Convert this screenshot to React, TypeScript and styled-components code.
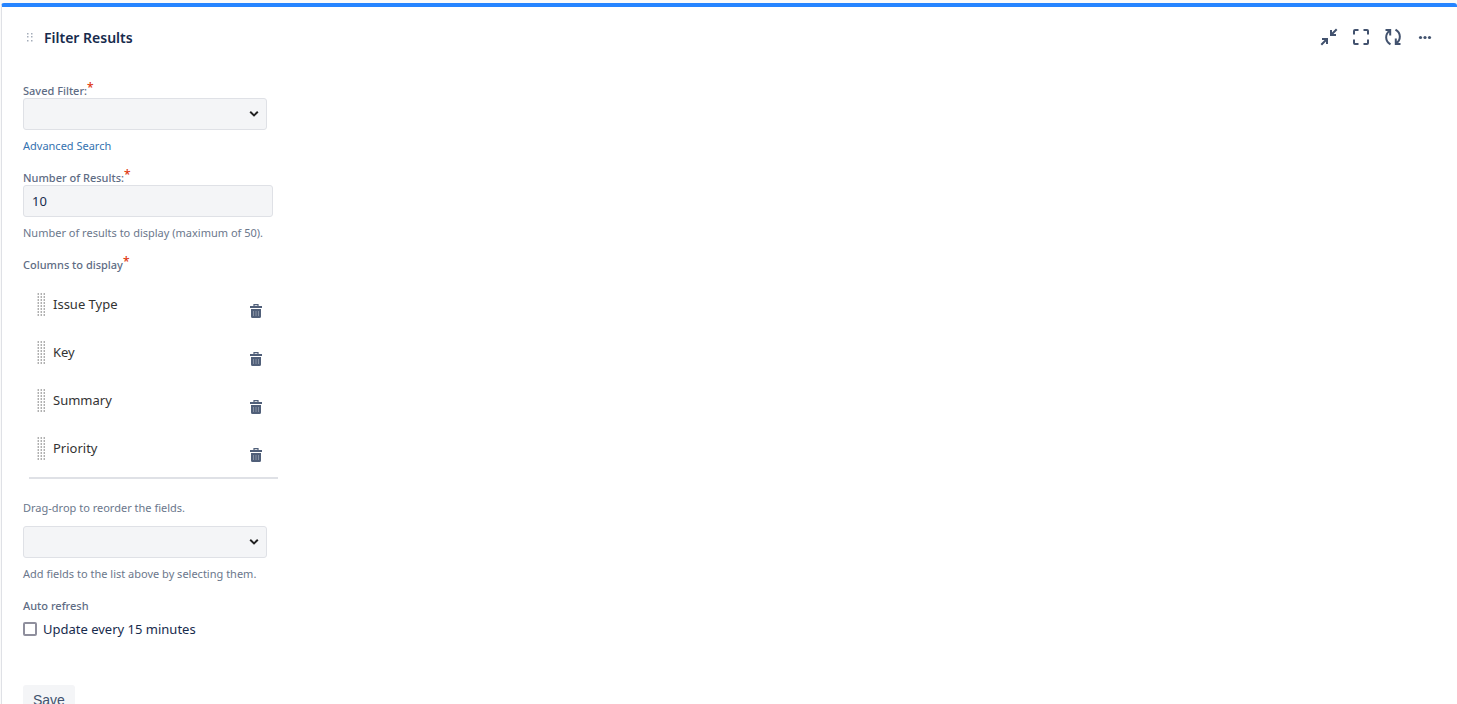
import React from 'react';
import styled, { createGlobalStyle } from 'styled-components';

const GlobalStyle = createGlobalStyle`
  * { box-sizing: border-box; }
  html { scrollbar-width: none; }
  body {
    margin: 0;
    background: #fafafa;
    color: #172b4d;
    font: 13px/20px "Segoe UI", "Noto Sans", "Open Sans", sans-serif;
  }
`;

const Gadget = styled.section`
  margin: 3px 0 0 1px;
  padding: 20px 20px 24px 21px;
  background: #fff;
  border-left: 1px solid #dfe1e6;
  border-top: 4px solid #2684ff;
  border-radius: 3px 3px 0 0;
`;

const Header = styled.header`
  display: flex;
  align-items: center;
  justify-content: space-between;
  height: 22px;
`;

const TitleGroup = styled.div`
  display: flex;
  align-items: center;
  gap: 10px;
  padding-left: 3px;
`;

const Title = styled.h2`
  margin: 0;
  font-size: 14px;
  line-height: 24px;
  font-weight: 600;
`;

const Actions = styled.div`
  display: flex;
  gap: 8px;
  padding-bottom: 2px;
`;

const IconButton = styled.button`
  display: flex;
  padding: 0;
  border: 0;
  background: none;
  color: #42526e;
  cursor: pointer;
`;

const Form = styled.form`
  display: flex;
  flex-direction: column;
  align-items: flex-start;
  padding-top: 33px;
`;

const Field = styled.div`
  display: flex;
  flex-direction: column;
  align-items: flex-start;
  margin-bottom: 15px;
`;

const Label = styled.label`
  display: block;
  height: 16px;
  color: #5e6c84;
  font-size: 11px;
  line-height: 18px;
  font-weight: 500;
`;

const Star = styled.span`
  color: #de350b;
  font-size: 12px;
  line-height: 0;
  vertical-align: 3px;
`;

const SelectWrap = styled.div`
  position: relative;
  width: 244px;
  svg {
    position: absolute;
    right: 8px;
    top: 12px;
    pointer-events: none;
  }
`;

const Select = styled.select`
  appearance: none;
  display: block;
  width: 100%;
  height: 32px;
  border: 1px solid #dfe1e6;
  border-radius: 3px;
  background: #f4f5f7;
`;

const TextInput = styled.input`
  width: 250px;
  height: 32px;
  padding: 0 8px;
  border: 1px solid #dfe1e6;
  border-radius: 3px;
  background: #f4f5f7;
  color: #172b4d;
  font: inherit;
`;

const Link = styled.a`
  margin-top: 8px;
  color: #3572b0;
  font-size: 11px;
  line-height: 16px;
  text-decoration: none;
`;

const Hint = styled.p`
  margin: 8px 0 0;
  color: #6b778c;
  font-size: 11px;
  line-height: 16px;
`;

const AddColumn = styled.div`
  margin-top: 10px;
`;

const Columns = styled.ul`
  width: 249px;
  margin: 9px 0 13px 6px;
  padding: 0 0 4px;
  list-style: none;
  border-bottom: 2px solid #dfe1e6;
`;

const ColumnRow = styled.li`
  display: flex;
  align-items: flex-start;
  height: 48px;
  padding: 12px 16px 0 8px;
  color: #333;
`;

const ColumnName = styled.span`
  flex: 1;
  padding-left: 8px;
  line-height: 22px;
`;

const DeleteButton = styled(IconButton)`
  margin-top: 11px;
  color: #505f79;
`;

const CheckLabel = styled.label`
  display: flex;
  align-items: center;
  gap: 6px;
  margin-top: 6px;
`;

const Checkbox = styled.input`
  appearance: none;
  width: 14px;
  height: 14px;
  margin: 0;
  border: 2px solid #8f8f9d;
  border-radius: 2px;
  background: #fff;
  &:checked { background: #0052cc; }
`;

const SaveButton = styled.button`
  margin-top: 31px;
  height: 30px;
  padding: 0 10px;
  border: 0;
  border-radius: 3px;
  background: #f4f5f7;
  color: #42526e;
  font: 14px/20px "Liberation Sans", Arial, sans-serif;
`;

const ActionIcon = ({ children }: { children: React.ReactNode }) => (
  <svg width="24" height="24" viewBox="0 0 24 24" fill="none" stroke="currentColor" strokeWidth="2" aria-hidden="true">
    {children}
  </svg>
);

const Chevron = () => (
  <svg width="10" height="8" viewBox="0 0 10 8" fill="none" stroke="#222" strokeWidth="2" aria-hidden="true">
    <path d="M1.200 1.800 5 5.400l3.800-3.600" />
  </svg>
);

const HeaderGrip = () => (
  <svg width="8" height="10" viewBox="0 0 8 10" fill="#a5adba" aria-hidden="true">
    {[0, 3, 7].map((y) => [1, 5].map((x) => <rect key={`${x}-${y}`} x={x} y={y} width="1.500" height="1.500" />))}
  </svg>
);

const RowGrip = () => (
  <svg width="8" height="24" viewBox="0 0 8 24" aria-hidden="true">
    {[0, 3, 6, 9, 12, 15, 18, 21].map((y) =>
      [0, 3, 6].map((x) => (
        <g key={`${x}-${y}`}>
          <rect x={x} y={y} width="2" height="2" fill="#dcdcdc" />
          <rect x={x + 1} y={y} width="1" height="2" fill="#b0b0b0" />
        </g>
      )),
    )}
  </svg>
);

const Trash = () => (
  <svg width="12" height="14" viewBox="0 0 12 14" aria-hidden="true">
    <path d="M4 2V.7h4V2" fill="none" stroke="currentColor" strokeWidth="1.200" />
    <path d="M0 2h12v2H0zM1 5h10v7.500a1.500 1.500 0 0 1-1.500 1.500h-7A1.500 1.500 0 0 1 1 12.500z" fill="currentColor" />
    <path d="M3.500 7v5M6 7v5M8.500 7v5" stroke="#8590a2" />
  </svg>
);

const Picker = ({ id, label }: { id: string; label?: string }) => (
  <SelectWrap>
    <Select id={id} aria-label={label} defaultValue="">
      <option value="" />
    </Select>
    <Chevron />
  </SelectWrap>
);

const columns = ['Issue Type', 'Key', 'Summary', 'Priority'];

export default function App() {
  return (
    <>
      <GlobalStyle />
      <Gadget>
        <Header>
          <TitleGroup>
            <HeaderGrip />
            <Title>Filter Results</Title>
          </TitleGroup>
          <Actions>
            <IconButton aria-label="Minimize">
              <ActionIcon>
                <path d="M19.700 4.300 14 10M14 5v5h5M4.300 19.700 10 14M5 14h5v5" />
              </ActionIcon>
            </IconButton>
            <IconButton aria-label="Maximize">
              <ActionIcon>
                <path d="M5 9.500V6a1 1 0 0 1 1-1h3.500M14.500 5H18a1 1 0 0 1 1 1v3.500M19 14.500V18a1 1 0 0 1-1 1h-3.500M9.500 19H6a1 1 0 0 1-1-1v-3.500" />
              </ActionIcon>
            </IconButton>
            <IconButton aria-label="Refresh">
              <ActionIcon>
                <path d="M9.500 19.300C3.800 16 3.800 9 9 5.500M4.500 5H9.200v5.500M14.500 4.700C20.200 8 20.200 15 15 18.500M19.500 19H14.800v-5.500" />
              </ActionIcon>
            </IconButton>
            <IconButton aria-label="More actions">
              <ActionIcon>
                <g fill="currentColor" stroke="none">
                  <circle cx="7.500" cy="12.500" r="1.600" />
                  <circle cx="12" cy="12.500" r="1.600" />
                  <circle cx="16.500" cy="12.500" r="1.600" />
                </g>
              </ActionIcon>
            </IconButton>
          </Actions>
        </Header>

        <Form onSubmit={(e) => e.preventDefault()}>
          <Field>
            <Label htmlFor="saved-filter">Saved Filter:<Star>*</Star></Label>
            <Picker id="saved-filter" />
            <Link href="#search">Advanced Search</Link>
          </Field>
          <Field>
            <Label htmlFor="result-count">Number of Results:<Star>*</Star></Label>
            <TextInput id="result-count" defaultValue="10" />
            <Hint>Number of results to display (maximum of 50).</Hint>
          </Field>
          <Field>
            <Label htmlFor="add-column">Columns to display<Star>*</Star></Label>
            <Columns>
              {columns.map((name) => (
                <ColumnRow key={name}>
                  <RowGrip />
                  <ColumnName>{name}</ColumnName>
                  <DeleteButton type="button" aria-label={`Remove ${name}`}><Trash /></DeleteButton>
                </ColumnRow>
              ))}
            </Columns>
            <Hint>Drag-drop to reorder the fields.</Hint>
            <AddColumn><Picker id="add-column" /></AddColumn>
            <Hint>Add fields to the list above by selecting them.</Hint>
          </Field>
          <Field>
            <Label as="span">Auto refresh</Label>
            <CheckLabel>
              <Checkbox type="checkbox" />
              Update every 15 minutes
            </CheckLabel>
          </Field>
          <SaveButton type="submit">Save</SaveButton>
        </Form>
      </Gadget>
    </>
  );
}
